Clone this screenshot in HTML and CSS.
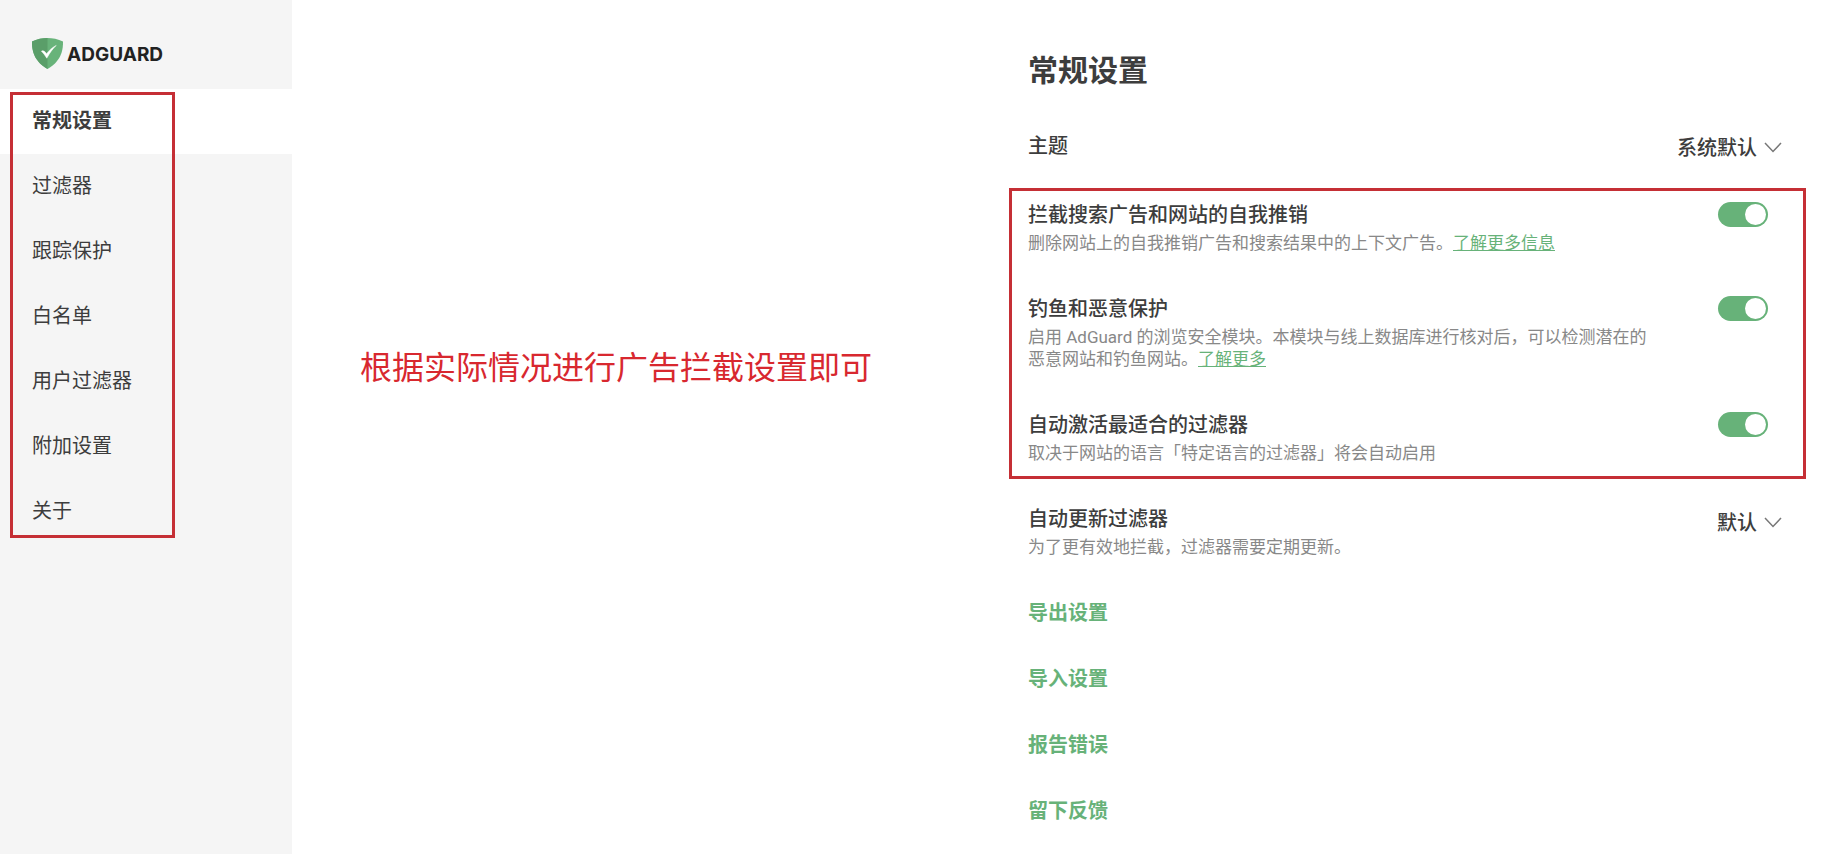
FILE: index.html
```html
<!DOCTYPE html>
<html lang="zh-CN">
<head>
<meta charset="utf-8">
<title>AdGuard 常规设置</title>
<link rel="stylesheet" href="styles.css">
</head>
<body>
<div class="page">
  <aside class="sidebar">
    <a class="logo" href="#">
      <svg class="logo-mark" viewBox="0 0 31 31" aria-hidden="true">
        <path d="M15.500 0C10.700 0 4.900 1.100 0 3.600 0 9.100 0 22.400 15.500 31 31 22.400 31 9.100 31 3.600 26.100 1.100 20.300 0 15.500 0z" fill="#68b37a"/>
        <path d="M15.500 31C0 22.400 0 9.100 0 3.600 4.900 1.100 10.700 0 15.500 0z" fill="#5a9e69"/>
        <path d="M9.400 13.200c1.800-1 3.300-.2 5.200 2.500 2.600-3.400 5.300-6 9.600-8.300-3.800 3.800-6.400 7.300-9.400 12.800-1.700-2.800-3.300-5-5.400-7z" fill="#fff" stroke="#fff" stroke-width=".5"/>
      </svg>
      <span class="logo-name">ADGUARD</span>
    </a>
    <nav class="menu">
      <a class="menu-item menu-item-active" href="#">常规设置</a>
      <a class="menu-item" href="#">过滤器</a>
      <a class="menu-item" href="#">跟踪保护</a>
      <a class="menu-item" href="#">白名单</a>
      <a class="menu-item" href="#">用户过滤器</a>
      <a class="menu-item" href="#">附加设置</a>
      <a class="menu-item" href="#">关于</a>
    </nav>
  </aside>

  <p class="note">根据实际情况进行广告拦截设置即可</p>

  <main class="settings">
    <h1 class="heading">常规设置</h1>

    <div class="row row-plain">
      <label class="title" for="theme">主题</label>
      <span class="picker">
        <select class="select" id="theme"><option>系统默认</option></select>
        <svg class="chevron" viewBox="0 0 18 11" aria-hidden="true"><path d="M1 1l8 8.500L17 1"/></svg>
      </span>
    </div>

    <section class="frame">
      <div class="row">
        <div class="text">
          <label class="title" for="ads">拦截搜索广告和网站的自我推销</label>
          <p class="desc">删除网站上的自我推销广告和搜索结果中的上下文广告。<a class="more" href="#">了解更多信息</a></p>
        </div>
        <input class="toggle" id="ads" type="checkbox" checked>
      </div>
      <div class="row">
        <div class="text">
          <label class="title" for="phishing">钓鱼和恶意保护</label>
          <p class="desc">启用 AdGuard 的浏览安全模块。本模块与线上数据库进行核对后，可以检测潜在的恶意网站和钓鱼网站。<a class="more" href="#">了解更多</a></p>
        </div>
        <input class="toggle" id="phishing" type="checkbox" checked>
      </div>
      <div class="row">
        <div class="text">
          <label class="title" for="auto">自动激活最适合的过滤器</label>
          <p class="desc">取决于网站的语言「特定语言的过滤器」将会自动启用</p>
        </div>
        <input class="toggle" id="auto" type="checkbox" checked>
      </div>
    </section>

    <div class="row row-plain">
      <div class="text">
        <label class="title" for="update">自动更新过滤器</label>
        <p class="desc">为了更有效地拦截，过滤器需要定期更新。</p>
      </div>
      <span class="picker picker-tall">
        <select class="select" id="update"><option>默认</option></select>
        <svg class="chevron" viewBox="0 0 18 11" aria-hidden="true"><path d="M1 1l8 8.500L17 1"/></svg>
      </span>
    </div>

    <div class="actions">
      <button class="action" type="button">导出设置</button>
      <button class="action" type="button">导入设置</button>
      <button class="action" type="button">报告错误</button>
      <button class="action" type="button">留下反馈</button>
    </div>
  </main>
</div>
</body>
</html>
```

FILE: styles.css
```css
* {
  box-sizing: border-box;
}

body {
  margin: 0;
  background: #fff;
  color: #3d3d3d;
  font: 20px/26px Roboto, "Noto Sans CJK SC", sans-serif;
}

a {
  color: inherit;
  text-decoration: none;
}

.page {
  display: flex;
  min-height: 100vh;
}

.sidebar {
  flex: 0 0 292px;
  background: #f5f5f5;
}

.logo {
  display: flex;
  align-items: center;
  gap: 4px;
  padding: 38px 32px 20px;
}

.logo-mark {
  width: 31px;
  height: 31px;
}

.logo-name {
  padding-top: 2px;
  color: #222;
  font: 700 19px/26px Inter, sans-serif;
}

.menu {
  position: relative;
}

.menu::after {
  content: "";
  position: absolute;
  inset: 3px 117px 6px 10px;
  border: 3px solid #c52f35;
  pointer-events: none;
}

.menu-item {
  display: block;
  padding: 19px 32px 20px;
}

.menu-item-active {
  background: #fff;
  font-weight: 700;
}

.note {
  flex: 1;
  margin: 0;
  padding: 350px 0 0 68px;
  color: #d8282f;
  font-size: 32px;
  line-height: 36px;
}

.settings {
  flex: 0 1 797px;
  margin-right: 33px;
  padding-top: 51px;
}

.heading {
  margin: 0 0 42px;
  padding-left: 19px;
  font-size: 30px;
  line-height: 40px;
}

.row {
  display: flex;
  justify-content: space-between;
  align-items: flex-start;
  gap: 60px;
}

.row-plain {
  padding: 0 24px 0 19px;
}

.title {
  display: block;
  font-weight: 500;
}

.desc {
  margin: 4px 0 0;
  color: #888;
  font-size: 17px;
  line-height: 22px;
}

.more {
  color: #67b279;
  text-decoration: underline;
}

.frame {
  display: grid;
  gap: 42px;
  margin: 27px 0;
  padding: 11px 35px 12px 16px;
  border: 3px solid #c52f35;
}

.toggle {
  flex: none;
  appearance: none;
  width: 50px;
  height: 25px;
  margin: 0;
  padding: 2px;
  border-radius: 13px;
  background: #67b279;
}

.toggle::before {
  content: "";
  display: block;
  width: 21px;
  height: 21px;
  border-radius: 50%;
  background: #fff;
}

.toggle:checked::before {
  margin-left: auto;
}

.picker {
  position: relative;
  padding-top: 2px;
}

.picker-tall {
  padding-top: 4px;
}

.select {
  appearance: none;
  display: block;
  padding: 0 25px 0 0;
  border: 0;
  background: none;
  color: inherit;
  font: inherit;
  font-weight: 500;
}

.chevron {
  position: absolute;
  right: 0;
  bottom: 8px;
  width: 18px;
  height: 11px;
  fill: none;
  stroke: #777;
  stroke-width: 1.5;
  pointer-events: none;
}

.action {
  padding: 0;
  border: 0;
  background: none;
  color: #67b279;
  font: inherit;
  font-weight: 700;
}

.actions {
  display: flex;
  flex-direction: column;
  align-items: flex-start;
  gap: 40px;
  padding: 42px 19px 30px;
}
```
